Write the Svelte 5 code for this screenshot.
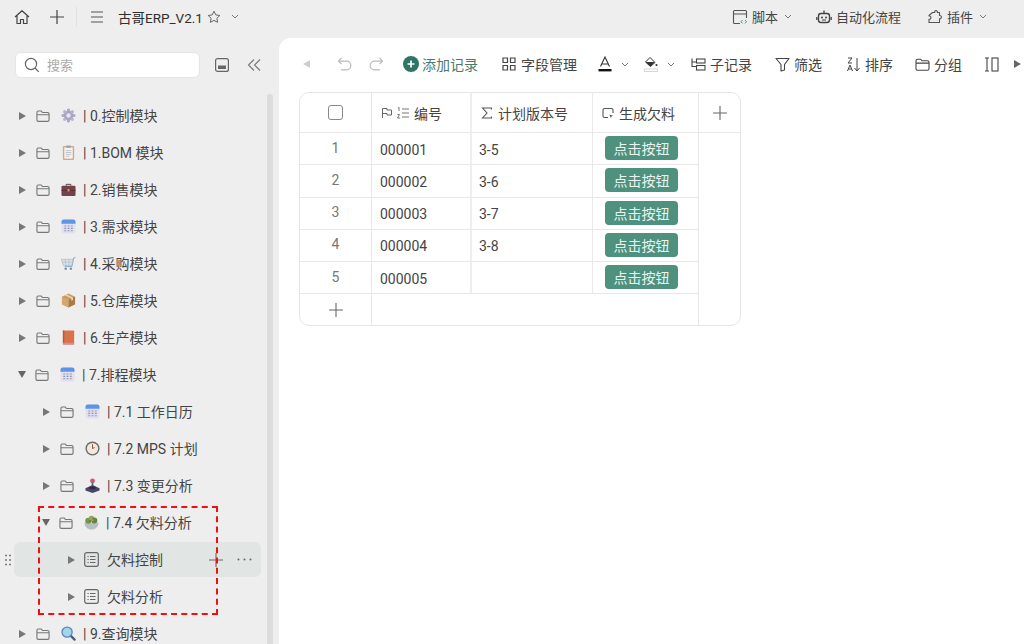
<script>
  const tree = [
    { level: 0, emoji: 'gear', label: '| 0.控制模块' },
    { level: 0, emoji: 'clip', label: '| 1.BOM 模块' },
    { level: 0, emoji: 'case', label: '| 2.销售模块' },
    { level: 0, emoji: 'cal', label: '| 3.需求模块' },
    { level: 0, emoji: 'cart', label: '| 4.采购模块' },
    { level: 0, emoji: 'box', label: '| 5.仓库模块' },
    { level: 0, emoji: 'book', label: '| 6.生产模块' },
    { level: 0, emoji: 'cal', label: '| 7.排程模块', open: true },
    { level: 1, emoji: 'cal', label: '| 7.1 工作日历' },
    { level: 1, emoji: 'clock', label: '| 7.2 MPS 计划' },
    { level: 1, emoji: 'joy', label: '| 7.3 变更分析' },
    { level: 1, emoji: 'salad', label: '| 7.4 欠料分析', open: true },
    { level: 2, label: '欠料控制', hover: true },
    { level: 2, label: '欠料分析' },
    { level: 0, emoji: 'lens', label: '| 9.查询模块' }
  ];
  const rows = [
    { n: 1, code: '000001', ver: '3-5' },
    { n: 2, code: '000002', ver: '3-6' },
    { n: 3, code: '000003', ver: '3-7' },
    { n: 4, code: '000004', ver: '3-8' },
    { n: 5, code: '000005', ver: '' }
  ];
</script>

{#snippet chev()}
  <svg class="chev" viewBox="0 0 8 5"><path d="M1 1l3 3 3-3" fill="none" stroke="#777" stroke-width="1"/></svg>
{/snippet}

{#snippet folder()}
  <svg class="ic14" viewBox="0 0 15 14"><path d="M1 3.2c0-.9.6-1.5 1.4-1.5h3.2l1.4 1.6h5.6c.8 0 1.4.6 1.4 1.4v6.6c0 .8-.6 1.4-1.4 1.4H2.400c-.8 0-1.400-.6-1.400-1.400zM1 5.600h13" fill="none" stroke="#777" stroke-width="1.200"/></svg>
{/snippet}

{#snippet emoji(k)}
  <svg class="ic15" viewBox="0 0 16 16">
    {#if k === 'gear'}
      <circle cx="8" cy="8" r="5.200" fill="#a9a6c4"/><circle cx="8" cy="2.200" r="1.700" fill="#a9a6c4"/><circle cx="8" cy="13.800" r="1.700" fill="#a9a6c4"/><circle cx="2.200" cy="8" r="1.700" fill="#a9a6c4"/><circle cx="13.800" cy="8" r="1.700" fill="#a9a6c4"/><circle cx="3.900" cy="3.900" r="1.700" fill="#b8b5d0"/><circle cx="12.100" cy="3.900" r="1.700" fill="#b8b5d0"/><circle cx="3.900" cy="12.100" r="1.700" fill="#b8b5d0"/><circle cx="12.100" cy="12.100" r="1.700" fill="#b8b5d0"/><circle cx="8" cy="8" r="2.400" fill="#e6e5ef"/>
    {:else if k === 'clip'}
      <rect x="2" y="1" width="12" height="15" rx="1" fill="#d9a878"/><rect x="3.500" y="2.500" width="9" height="12" fill="#f3f3f5"/><rect x="5.500" y=".5" width="5" height="2.500" rx=".6" fill="#9aa0a8"/><path d="M5 6h6M5 8h6M5 10h6M5 12h4" stroke="#b0b3ba" stroke-width=".8"/>
    {:else if k === 'case'}
      <path d="M5.500 4V2.500h5V4" fill="none" stroke="#5a3a3a" stroke-width="1"/><rect x=".5" y="4" width="15" height="11" rx="1.200" fill="#74424a"/><rect x=".5" y="8.500" width="15" height="1" fill="#5c3239"/><rect x="7" y="7.500" width="2" height="2.500" fill="#d9a860"/>
    {:else if k === 'cal'}
      <rect x=".5" y=".5" width="15" height="15" rx="2.500" fill="#e2dff0"/><path d="M.5 5v-2a2.500 2.500 0 0 1 2.500-2.500h10a2.500 2.500 0 0 1 2.500 2.500v2z" fill="#5f93e8"/><path d="M3.500 7.500h2M7 7.500h2M10.500 7.500h2M3.500 10h2M7 10h2M10.500 10h2M3.500 12.500h2M7 12.500h2M10.500 12.500h2" stroke="#8f95ad" stroke-width="1.200"/>
    {:else if k === 'cart'}
      <path d="M15.500 1.500l-2 .6-1.800 9H4" fill="none" stroke="#7aa7d8" stroke-width="1"/><path d="M.5 3.500h12.300l-1.300 6.500H2.500z" fill="#dfe3ea" stroke="#aab0ba" stroke-width=".7"/><path d="M4.500 3.500l.6 6.500M8.500 3.500v6.500M1.500 6.500h10.800" stroke="#aab0ba" stroke-width=".6"/><circle cx="5" cy="13.500" r="1.300" fill="#7d8694"/><circle cx="10.500" cy="13.500" r="1.300" fill="#7d8694"/>
    {:else if k === 'box'}
      <path d="M8 .5l7 3.400v8L8 15.500 1 11.900v-8z" fill="#c99b66"/><path d="M8 7.500l7-3.600v8L8 15.500z" fill="#a97a4a"/><path d="M1 3.900L8 7.500v8l-7-3.600z" fill="#d3a871"/><path d="M4 2.300L11 5.900v2.400l1.800-.9V5L5.800 1.400z" fill="#ecd5ae"/>
    {:else if k === 'book'}
      <rect x="2" y=".5" width="12" height="15" rx=".8" fill="#d9714a"/><rect x="2" y="13.500" width="12" height="2" fill="#d48a9a"/><rect x="2" y=".5" width="1.500" height="13" fill="#b85a3e"/>
    {:else if k === 'clock'}
      <circle cx="8" cy="8" r="7.500" fill="#6d6a68"/><circle cx="8" cy="8" r="6" fill="#efe9e0"/><path d="M8 8V3.500M8 8l2.200-1" stroke="#a33b3b" stroke-width="1"/>
    {:else if k === 'joy'}
      <circle cx="8" cy="3" r="2.600" fill="#d8576a"/><rect x="7.100" y="4" width="1.800" height="6" fill="#66607a"/><path d="M.5 11l7.500-3.500 7.500 3.500v2.200L8 16 .5 13.200z" fill="#4a4468"/><ellipse cx="8" cy="10.600" rx="3.500" ry="1.500" fill="#2e2a48"/>
    {:else if k === 'salad'}
      <path d="M.5 8h15c0 4.500-3 7.500-7.500 7.500S.5 12.500.5 8z" fill="#b9bdc4"/><circle cx="4.500" cy="6" r="3.200" fill="#6f9a4e"/><circle cx="11" cy="5.800" r="3.200" fill="#5c8a40"/><circle cx="8" cy="3.800" r="3" fill="#86ad5a"/><circle cx="6.500" cy="6.500" r="1.300" fill="#c8553d"/><circle cx="10" cy="4" r="1.100" fill="#c8553d"/>
    {:else if k === 'lens'}
      <path d="M10.500 10.500l4 4" stroke="#4a5a80" stroke-width="2.400" stroke-linecap="round"/><circle cx="6.500" cy="6.500" r="5.400" fill="#9fd6ee" stroke="#5f86ad" stroke-width="1.400"/>
    {/if}
  </svg>
{/snippet}

<div class="page">
  <header class="topbar">
    <div class="top-left">
      <svg class="ic16" viewBox="0 0 16 16"><path d="M1 8l7-6.300L15 8M3 6.500V14.500h3.500v-4h3v4H13V6.500" fill="none" stroke="#444" stroke-width="1.200" stroke-linejoin="round"/></svg>
      <svg class="ic14 plus" viewBox="0 0 14 14"><path d="M7 0v14M0 7h14" stroke="#444" stroke-width="1.200"/></svg>
      <span class="vline"></span>
      <svg class="ic14 menu" viewBox="0 0 14 14"><path d="M1 2h12M1 7h12M1 12h12" stroke="#555" stroke-width="1.100"/></svg>
      <span class="title">古哥ERP_V2.1</span>
      <svg class="ic14 star" viewBox="0 0 14 14"><path d="M7 1.200l1.800 3.700 4 .6-2.900 2.800.7 4L7 10.400l-3.600 1.900.7-4L1.200 5.500l4-.6z" fill="none" stroke="#666" stroke-width="1"/></svg>
      <span class="star-chev">{@render chev()}</span>
    </div>
    <div class="top-right">
      <span class="top-item">
        <svg class="ic16" viewBox="0 0 16 16"><path d="M8 14.500H2.500c-.7 0-1-.4-1-1V2.500c0-.6.4-1 1-1h11c.6 0 1 .4 1 1V9M1.500 5h13" fill="none" stroke="#555" stroke-width="1.100"/><path d="M10.500 11l-1.500 1.700 1.500 1.700M13 11l1.500 1.700-1.500 1.700" fill="none" stroke="#3c9a6a" stroke-width="1"/></svg>
        脚本 {@render chev()}
      </span>
      <span class="top-item">
        <svg class="ic16" viewBox="0 0 16 16"><rect x="2.500" y="4.500" width="11" height="9" rx="2.500" fill="none" stroke="#444" stroke-width="1.400"/><path d="M8 1.500v3M.8 8v3M15.200 8v3" stroke="#444" stroke-width="1.300"/><circle cx="6" cy="8.500" r="1" fill="#444"/><circle cx="10" cy="8.500" r="1" fill="#444"/><path d="M6 11h4" stroke="#444"/></svg>
        自动化流程
      </span>
      <span class="top-item plugin">
        <svg class="ic16" viewBox="0 0 16 16"><path d="M5.500 3.500h2.200c-.6-2.500 3.200-2.500 2.600 0h2.200v3c2.500-.4 2.500 3.600 0 3.200v3.800H2v-3.300c2.600.5 2.600-3.700 0-3.200v-.5z" fill="none" stroke="#555" stroke-width="1.100" stroke-linejoin="round"/></svg>
        插件 {@render chev()}
      </span>
    </div>
  </header>

  <div class="body">
    <aside class="sidebar">
      <div class="side-head">
        <div class="search">
          <svg class="ic16" viewBox="0 0 16 16"><circle cx="7" cy="7" r="5.600" fill="none" stroke="#666" stroke-width="1.200"/><path d="M11 11l3.800 3.800" stroke="#666" stroke-width="1.200"/></svg>
          <span class="search-text">搜索</span>
        </div>
        <svg class="ic14 collapse" viewBox="0 0 14 14"><rect x=".6" y=".6" width="12.800" height="12.800" rx="2" fill="none" stroke="#666" stroke-width="1.200"/><rect x="3" y="7.500" width="8" height="3.500" fill="#666"/></svg>
        <svg class="ic14 dbl" viewBox="0 0 14 14"><path d="M7 1.500L1.500 7 7 12.500M13 1.500L7.500 7l5.500 5.500" fill="none" stroke="#777" stroke-width="1.100"/></svg>
      </div>
      <div class="tree">
        {#each tree as item}
          <div class="row level-{item.level}" class:hover={item.hover}>
            {#if item.hover}
              <svg class="grip" viewBox="0 0 6 12"><circle cx="1" cy="1.500" r="1" fill="#777"/><circle cx="5" cy="1.500" r="1" fill="#777"/><circle cx="1" cy="6" r="1" fill="#777"/><circle cx="5" cy="6" r="1" fill="#777"/><circle cx="1" cy="10.500" r="1" fill="#777"/><circle cx="5" cy="10.500" r="1" fill="#777"/></svg>
            {/if}
            <span class="tri" class:open={item.open}></span>
            {#if item.level < 2}
              {@render folder()}
              <span class="emoji">{@render emoji(item.emoji)}</span>
            {:else}
              <svg class="ic15" viewBox="0 0 15 15"><rect x=".7" y=".7" width="13.600" height="13.600" rx="2" fill="none" stroke="#666" stroke-width="1.200"/><path d="M3.500 4.500h1.200M6 4.500h5.500M3.500 7.500h1.200M6 7.500h5.500M3.500 10.500h1.200M6 10.500h5.500" stroke="#666" stroke-width="1"/></svg>
            {/if}
            <span class="label">{item.label}</span>
            {#if item.hover}
              <span class="row-actions">
                <svg class="ic14" viewBox="0 0 14 14"><path d="M7 0v14M0 7h14" stroke="#666" stroke-width="1.100"/></svg>
                <svg class="dots" viewBox="0 0 15 3"><circle cx="1.500" cy="1.500" r="1" fill="#666"/><circle cx="7.500" cy="1.500" r="1" fill="#666"/><circle cx="13.500" cy="1.500" r="1" fill="#666"/></svg>
              </span>
            {/if}
          </div>
        {/each}
      </div>
      <div class="scrollbar"></div>
    </aside>

    <main class="main">
      <div class="toolbar">
        <span class="small-tri back"></span>
        <svg class="ic15 undo" viewBox="0 0 15 15"><path d="M4.500 1L1.500 4.200l3 3M1.500 4.200h8a4.300 4.300 0 0 1 0 8.600H4" fill="none" stroke="#bbb" stroke-width="1.200"/></svg>
        <svg class="ic15 redo" viewBox="0 0 15 15"><path d="M10.500 1l3 3.200-3 3M13.500 4.200h-8a4.300 4.300 0 0 0 0 8.600H11" fill="none" stroke="#bbb" stroke-width="1.200"/></svg>
        <span class="tool add">
          <svg class="ic16" viewBox="0 0 16 16"><circle cx="8" cy="8" r="8" fill="#2f7565"/><path d="M8 4.500v7M4.500 8h7" stroke="#fff" stroke-width="1.700"/></svg>
          添加记录
        </span>
        <span class="tool fields">
          <svg class="ic14" viewBox="0 0 14 14"><path d="M1 1h4.500v4.500H1zM8.500 1H13v4.500H8.500zM1 8.500h4.500V13H1zM8.500 8.500H13V13H8.500z" fill="none" stroke="#444" stroke-width="1.200"/></svg>
          字段管理
        </span>
        <span class="tool color">
          <svg class="tall" viewBox="0 0 14 16"><path d="M2.500 10.500L7 1l4.500 9.500M4 8h6" fill="none" stroke="#333" stroke-width="1.100"/><rect x="0.500" y="13" width="13" height="2.400" fill="#111"/></svg>
          {@render chev()}
        </span>
        <span class="tool fill">
          <svg class="tall" viewBox="0 0 14 16"><path d="M6 1.500L11 6.500 6.500 10.500 1.500 6z" fill="#fff" stroke="#333" stroke-width="1"/><path d="M1.500 6h9.200L6.500 10.500z" fill="#333"/><circle cx="12.500" cy="9" r="1.100" fill="#333"/><rect x="0.500" y="13" width="13" height="2.400" fill="none" stroke="#ccc" stroke-width=".8"/></svg>
          {@render chev()}
        </span>
        <span class="tool sub">
          <svg class="ic15" viewBox="0 0 15 14"><path d="M1 1v8h4M1 4.500h4" fill="none" stroke="#444" stroke-width="1.100"/><rect x="5.500" y="1.500" width="8.500" height="4" fill="none" stroke="#444" stroke-width="1.100"/><rect x="5.500" y="8" width="8.500" height="4.500" fill="none" stroke="#444" stroke-width="1.100"/></svg>
          子记录
        </span>
        <span class="tool filter">
          <svg class="ic15" viewBox="0 0 15 15"><path d="M1 1.500h13L9.500 7.500V13l-3.500 1V7.500z" fill="none" stroke="#444" stroke-width="1.100" stroke-linejoin="round"/></svg>
          筛选
        </span>
        <span class="tool sort">
          <svg class="ic15" viewBox="0 0 15 15"><path d="M2 1h4L2 6h4M1.500 14l2.500-6 2.500 6M2.500 12h3M11 1v13M11 14l-2.500-3M11 14l2.500-3" fill="none" stroke="#444" stroke-width="1"/></svg>
          排序
        </span>
        <span class="tool group">
          <svg class="ic15" viewBox="0 0 15 14"><path d="M1 3.200c0-.9.6-1.500 1.400-1.500h3.200l1.400 1.600h5.600c.8 0 1.400.6 1.400 1.400v6.600c0 .8-.6 1.400-1.400 1.400H2.400c-.8 0-1.400-.6-1.400-1.400zM1 5.600h13" fill="none" stroke="#444" stroke-width="1.100"/></svg>
          分组
        </span>
        <span class="tool cols">
          <svg class="ic15" viewBox="0 0 15 15"><path d="M1 1h4M1 14h4M3 1v13" fill="none" stroke="#444" stroke-width="1.100"/><rect x="8" y="1" width="6" height="13" fill="none" stroke="#444" stroke-width="1.100"/></svg>
        </span>
        <span class="small-tri fwd"></span>
      </div>

      <div class="table">
        <div class="cell head num"><span class="check"></span></div>
        <div class="cell head">
          <svg class="ic12" viewBox="0 0 12 12"><path d="M1.500 11V1.500h4.500v1.500h4.500v5H6V6.500H1.500" fill="none" stroke="#666" stroke-width="1"/></svg>
          <svg class="ic12" viewBox="0 0 12 12"><path d="M5 2h7M5 6h7M5 10h7M1 1l1-.5V4M.5 7.500h2L.5 11h2.500" fill="none" stroke="#666" stroke-width=".9"/></svg>
          <span class="head-text">编号</span>
        </div>
        <div class="cell head thick">
          <svg class="ic12 sigma" viewBox="0 0 12 12"><path d="M10.500 2.500V1h-9l4.500 5-4.500 5h9V9.500" fill="none" stroke="#555" stroke-width="1.100"/></svg>
          <span class="head-text">计划版本号</span>
        </div>
        <div class="cell head">
          <svg class="ic12" viewBox="0 0 12 12"><path d="M6 10.500H2.500c-.8 0-1.500-.7-1.500-1.500V3c0-.8.700-1.500 1.500-1.500h7c.8 0 1.500.7 1.500 1.500v3" fill="none" stroke="#555" stroke-width="1.100"/><path d="M7.500 7.500l3.500 1.300-1.500.7-.7 1.500z" fill="#555"/></svg>
          <span class="head-text">生成欠料</span>
        </div>
        <div class="cell head add-col">
          <svg class="ic16" viewBox="0 0 16 16"><path d="M8 1v14M1 8h14" stroke="#666" stroke-width="1.100"/></svg>
        </div>

        {#each rows as r}
          <div class="cell num idx">{r.n}</div>
          <div class="cell data">{r.code}</div>
          <div class="cell data thick">{r.ver}</div>
          <div class="cell btn-cell"><span class="btn">点击按钮</span></div>
        {/each}

        <div class="side-fill"></div>

        <div class="cell num foot">
          <svg class="ic16" viewBox="0 0 16 16"><path d="M8 1v14M1 8h14" stroke="#666" stroke-width="1.100"/></svg>
        </div>
        <div class="cell foot-fill"></div>
      </div>
    </main>
  </div>

  <div class="dashed"></div>
</div>

<style>
  :global(body) { margin: 0; }
  .page {
    position: relative;
    width: 1024px;
    height: 644px;
    overflow: hidden;
    background: #eeeeee;
    color: #444;
    font-family: Roboto, "Noto Sans CJK SC", sans-serif;
    font-size: 14px;
    display: flex;
    flex-direction: column;
  }
  svg { display: block; flex: none; }
  .ic12 { width: 12px; height: 12px; }
  .ic14 { width: 14px; height: 14px; }
  .ic15 { width: 15px; height: 15px; }
  .ic16 { width: 16px; height: 16px; }
  .tall { width: 14px; height: 16px; }
  .chev { width: 8px; height: 5px; }

  .topbar {
    height: 38px;
    flex: none;
    display: flex;
    justify-content: space-between;
    align-items: center;
    padding: 0 0 5px 14px;
    box-sizing: border-box;
    font-size: 13px;
  }
  .top-left, .top-right { display: flex; align-items: center; }
  .plus { margin-left: 20px; }
  .vline { width: 1px; height: 20px; background: #e2e2e2; margin-left: 12px; }
  .menu { margin-left: 13px; }
  .title { margin-left: 14px; font-size: 13.5px; color: #2f2f2f; width: 78px; white-space: nowrap; }
  .star { margin-left: 11px; }
  .star-chev { margin-left: 10px; }
  .top-right { padding-right: 37px; gap: 24px; }
  .top-item { display: flex; align-items: center; gap: 4px; white-space: nowrap; }
  .top-item .chev { margin-left: 2px; }
  .plugin { margin-left: 2px; }

  .body { flex: 1; display: flex; min-height: 0; }
  .sidebar { width: 279px; flex: none; position: relative; padding-top: 14px; box-sizing: border-box; overflow: hidden; }
  .side-head { display: flex; align-items: center; padding-left: 15px; height: 26px; }
  .search {
    width: 185px; height: 26px; box-sizing: border-box;
    background: #fff; border: 1px solid #e6e6e6; border-radius: 6px;
    display: flex; align-items: center; gap: 7px; padding-left: 8px;
    color: #aaa; font-size: 13px;
  }
  .search-text { padding-bottom: 1px; }
  .collapse { margin-left: 15px; }
  .dbl { margin-left: 18px; }

  .tree { margin-top: 20px; padding-left: 14px; width: 247px; }
  .row {
    position: relative;
    height: 35px; margin-bottom: 2px;
    display: flex; align-items: center;
    border-radius: 6px;
    white-space: nowrap;
  }
  .row.hover { background: #e1e6e4; }
  .level-0 { padding-left: 4px; }
  .level-1 { padding-left: 28px; }
  .level-2 { padding-left: 53px; }
  .tri {
    width: 0; height: 0; flex: none;
    border-left: 7px solid #777;
    border-top: 4.5px solid transparent;
    border-bottom: 4.5px solid transparent;
    margin-left: 1px; margin-right: 10px;
  }
  .tri.open {
    border-left: 4.5px solid transparent; border-right: 4.5px solid transparent;
    border-top: 7px solid #666; border-bottom: 0;
    margin-left: 0; margin-right: 9px;
  }
  .level-2 .tri { margin-right: 9px; }
  .emoji { margin-left: 11px; margin-right: 7px; }
  .label { padding-bottom: 1px; }
  .level-2 .label { margin-left: 8px; }
  .grip {
    position: absolute; left: -9px; top: 12px;
    width: 6px; height: 12px;
  }
  .row-actions {
    position: absolute; right: 9px; top: 0; height: 35px;
    display: flex; align-items: center; gap: 14px;
  }
  .dots { width: 15px; height: 3px; }
  .scrollbar {
    position: absolute; left: 267px; top: 56px; bottom: 0; width: 6px;
    background: #dcdcdc; border-radius: 3px 3px 0 0;
  }

  .main { flex: 1; background: #fff; border-top-left-radius: 12px; min-width: 0; overflow: hidden; }
  .toolbar { height: 54px; box-sizing: border-box; display: flex; align-items: center; padding: 0 0 2px 24px; white-space: nowrap; }
  .small-tri {
    width: 0; height: 0; flex: none;
    border-top: 4px solid transparent; border-bottom: 4px solid transparent;
  }
  .back { border-right: 7px solid #ccc; }
  .fwd { border-left: 7px solid #666; margin-left: 15px; }
  .undo { margin-left: 27px; }
  .redo { margin-left: 17px; }
  .tool { display: flex; align-items: center; gap: 5px; }
  .add { margin-left: 19px; color: #4a7a6d; gap: 3px; }
  .fields { margin-left: 24px; }
  .color { margin-left: 21px; gap: 9px; }
  .fill { margin-left: 15px; gap: 9px; }
  .sub { margin-left: 16px; gap: 4px; }
  .filter { margin-left: 23px; gap: 4px; }
  .sort { margin-left: 24px; gap: 4px; }
  .group { margin-left: 22px; gap: 4px; }
  .cols { margin-left: 22px; }

  .table {
    margin-left: 20px;
    width: 442px; height: 234px; box-sizing: border-box;
    border: 1px solid #e6e6e6; border-radius: 10px;
    display: grid;
    grid-template-columns: 72px 100px 121px 106px 41px;
    grid-template-rows: 40px repeat(5, 32.25px) 30.75px;
    overflow: hidden;
  }
  .cell {
    display: flex; align-items: center;
    box-sizing: border-box;
    border-right: 1px solid #e8e8e8;
    border-bottom: 1px solid #e8e8e8;
    padding-left: 8px;
    color: #444;
  }
  .num { justify-content: center; padding-left: 0; }
  .head { gap: 4px; padding-left: 9px; }
  .head.num { padding-left: 0; }
  .head-text { margin-left: 1px; }
  .check { width: 13px; height: 13px; border: 1px solid #888; border-radius: 3px; }
  .head:nth-child(2), .data:not(.thick) { border-right: 2px solid #eeeeee; }
  .add-col { justify-content: center; border-right: 0; padding-left: 0; }
  .idx { color: #777; padding-bottom: 2px; }
  .data { padding-top: 2px; }
  .data.thick { padding-left: 7px; }
  .btn-cell { padding-left: 12px; padding-bottom: 1px; }
  .btn {
    width: 73px; height: 24px; border-radius: 4px;
    background: #4f917f; color: #eaf4f0;
    display: flex; align-items: center; justify-content: center;
  }
  .side-fill { grid-column: 5; grid-row: 2 / span 6; }
  .foot { grid-column: 1; grid-row: 7; border-bottom: 0; }
  .foot-fill { grid-column: 2 / span 3; grid-row: 7; border-bottom: 0; }

  .dashed {
    position: absolute; left: 38px; top: 506px;
    width: 180px; height: 109px; box-sizing: border-box;
    border: 2px dashed #f01010;
    pointer-events: none;
  }
</style>
